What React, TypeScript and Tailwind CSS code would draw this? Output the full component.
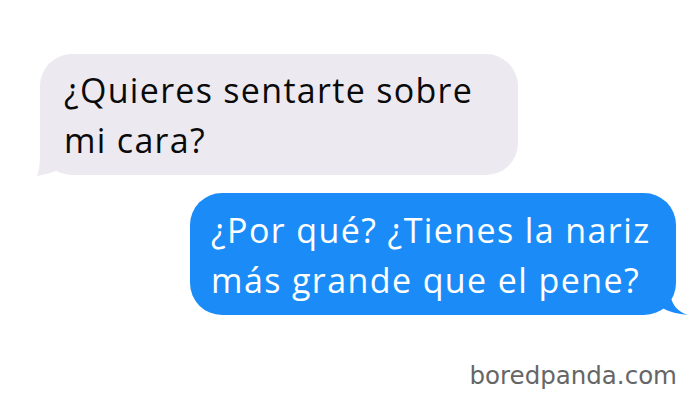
import React from 'react';

const font = { fontFamily: '"Open Sans", "Noto Sans", sans-serif' };

export default function App() {
  return (
    <div className="w-[700px] h-[417px] bg-white flex flex-col overflow-hidden" style={font}>
      {/* Received message */}
      <div className="relative ml-[40px] mt-[54px] w-[478px] h-[121px] bg-[#ece9f1] rounded-[32px] pl-[24px] pt-[11px]">
        <svg className="absolute left-[-4px] bottom-[-6px]" width="44" height="40" viewBox="0 0 44 40">
          <path d="M4 0 L4 10 C4 24 3 30 1 35 C12 33 20 30 26 28 L44 20 L44 0 Z" fill="#ece9f1" />
        </svg>
        <p className="relative text-[34px] leading-[50px] tracking-[1.3px] text-[#0a0a0a]">
          ¿Quieres sentarte sobre<br />mi cara?
        </p>
      </div>

      {/* Sent message */}
      <div className="relative ml-[190px] mt-[18px] w-[486px] h-[122px] bg-[#1b8cf7] rounded-[32px] pl-[21px] pt-[12px]">
        <svg className="absolute right-[-14px] bottom-[-5px]" width="50" height="40" viewBox="0 0 50 40">
          <path d="M30 0 L30 10 C30 24 38 32 48 35 C38 34 30 32 22 28 L0 20 L0 0 Z" fill="#1b8cf7" />
        </svg>
        <p className="relative text-[34px] leading-[50px] tracking-[1.4px] text-white">
          ¿Por qué? ¿Tienes la nariz<br />más grande que el pene?
        </p>
      </div>

      {/* Watermark */}
      <div className="flex justify-end pr-[23px] mt-[47px]">
        <span className="text-[24.5px] leading-[28px] text-[#666]" style={{ fontFamily: '"DejaVu Sans", Verdana, sans-serif' }}>
          boredpanda.com
        </span>
      </div>
    </div>
  );
}
